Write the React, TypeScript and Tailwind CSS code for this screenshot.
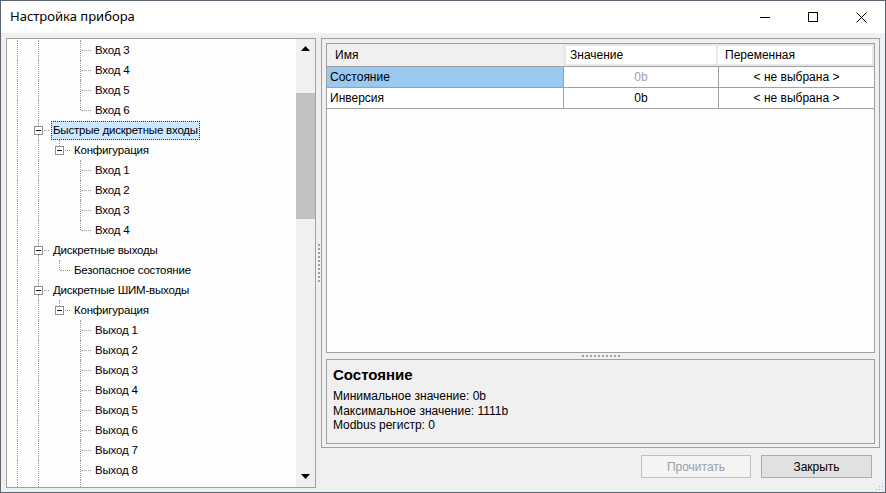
import React from "react";

type Guide = "pipe" | "tee" | "elbow" | "none";

type Node = {
  label: string;
  guides: Guide[];
  box?: boolean;
  selected?: boolean;
};

const P: Guide = "pipe";
const N: Guide = "none";

const rows: Node[] = [
  { label: "Вход 3", guides: [P, P, N, "tee"] },
  { label: "Вход 4", guides: [P, P, N, "tee"] },
  { label: "Вход 5", guides: [P, P, N, "tee"] },
  { label: "Вход 6", guides: [P, P, N, "elbow"] },
  { label: "Быстрые дискретные входы", guides: [P, "tee"], box: true, selected: true },
  { label: "Конфигурация", guides: [P, P, "elbow"], box: true },
  { label: "Вход 1", guides: [P, P, N, "tee"] },
  { label: "Вход 2", guides: [P, P, N, "tee"] },
  { label: "Вход 3", guides: [P, P, N, "tee"] },
  { label: "Вход 4", guides: [P, P, N, "elbow"] },
  { label: "Дискретные выходы", guides: [P, "tee"], box: true },
  { label: "Безопасное состояние", guides: [P, P, "elbow"] },
  { label: "Дискретные ШИМ-выходы", guides: [P, "tee"], box: true },
  { label: "Конфигурация", guides: [P, P, "elbow"], box: true },
  { label: "Выход 1", guides: [P, P, N, "tee"] },
  { label: "Выход 2", guides: [P, P, N, "tee"] },
  { label: "Выход 3", guides: [P, P, N, "tee"] },
  { label: "Выход 4", guides: [P, P, N, "tee"] },
  { label: "Выход 5", guides: [P, P, N, "tee"] },
  { label: "Выход 6", guides: [P, P, N, "tee"] },
  { label: "Выход 7", guides: [P, P, N, "tee"] },
  { label: "Выход 8", guides: [P, P, N, "tee"] },
];

function GuideCell({ g, last, box }: { g: Guide; last: boolean; box?: boolean }) {
  return (
    <div className="relative w-[21px] h-full shrink-0">
      {(g === "pipe" || g === "tee") && (
        <div className="absolute left-[10px] top-0 bottom-0 border-l border-dotted border-[#a0a0a0]" />
      )}
      {g === "elbow" && (
        <div className="absolute left-[10px] top-0 h-[10px] border-l border-dotted border-[#a0a0a0]" />
      )}
      {last && (g === "tee" || g === "elbow") && (
        <div className="absolute left-[11px] top-[10px] w-[10px] border-t border-dotted border-[#a0a0a0]" />
      )}
      {last && box && (
        <div className="absolute left-[6px] top-[6px] w-[9px] h-[9px] border border-[#8f8f8f] bg-white flex items-center justify-center">
          <div className="w-[5px] h-px bg-[#1a1a1a]" />
        </div>
      )}
    </div>
  );
}

function TreeRow({ node }: { node: Node }) {
  return (
    <div className="flex h-[20px] items-center shrink-0">
      {node.guides.map((g, i) => (
        <GuideCell key={i} g={g} last={i === node.guides.length - 1} box={node.box} />
      ))}
      <span
        className={
          "ml-[2px] px-[1px] h-[19px] leading-[17px] whitespace-nowrap border tracking-[-0.2px] " +
          (node.selected ? "bg-[#cce8ff] border-dotted border-[#333]" : "border-transparent")
        }
      >
        {node.label}
      </span>
    </div>
  );
}

function Tree() {
  return (
    <div className="w-[310px] h-[450px] border border-[#a0a0a0] bg-[#fdfdfd] flex shrink-0">
      <div className="flex-1 overflow-hidden pt-[1px] flex flex-col text-[11.5px] text-black">
        {rows.map((r, i) => (
          <TreeRow key={i} node={r} />
        ))}
        {/* guide lines continuing below the last visible row */}
        <div className="flex flex-1">
          <GuideCell g="pipe" last={false} />
          <GuideCell g="pipe" last={false} />
          <GuideCell g="none" last={false} />
          <GuideCell g="pipe" last={false} />
        </div>
      </div>
      <div className="w-[19px] bg-[#f0f0f0] flex flex-col items-center">
        <div className="h-[19px] w-full flex items-center justify-center">
          <svg width="9" height="5" viewBox="0 0 9 5">
            <path d="M0 5 L4.5 0 L9 5 Z" fill="#000" />
          </svg>
        </div>
        <div className="mt-[35px] w-full h-[126px] bg-[#c1c1c1]" />
        <div className="flex-1" />
        <div className="h-[22px] w-full flex items-center justify-center">
          <svg width="9" height="5" viewBox="0 0 9 5">
            <path d="M0 0 L9 0 L4.5 5 Z" fill="#000" />
          </svg>
        </div>
      </div>
    </div>
  );
}

function Dots({ vertical }: { vertical?: boolean }) {
  const items = Array.from({ length: 10 });
  return (
    <div className={vertical ? "flex flex-col gap-[2px]" : "flex gap-[2px]"}>
      {items.map((_, i) => (
        <div key={i} className="w-[2px] h-[2px] bg-[#a0a0a0]" />
      ))}
    </div>
  );
}

function Grid() {
  return (
    <div className="h-[310px] border border-[#a0a0a0] bg-[#fdfdfd] text-[12px] text-black flex flex-col">
      <div className="flex h-[23px] border-b border-[#a0a0a0] bg-[#f0f0f0]">
        <div className="w-[236px] pl-[8px] flex items-center">Имя</div>
        <div className="w-[155px] border-l-[3px] border-y-[2px] border-r-[2px] border-[#e8e8e8] bg-white pl-[4px] flex items-center">
          Значение
        </div>
        <div className="flex-1 border-y-[2px] border-r-[2px] border-[#e8e8e8] bg-white pl-[7px] flex items-center">
          Переменная
        </div>
      </div>
      <div className="flex h-[21px] border-b border-[#a0a0a0]">
        <div className="w-[236px] pl-[3px] bg-[#99c9ef] flex items-center">Состояние</div>
        <div className="w-[155px] border-l border-[#a0a0a0] bg-white text-[#a0a0a0] flex items-center justify-center">
          0b
        </div>
        <div className="flex-1 border-l border-[#a0a0a0] bg-white flex items-center justify-center">
          &lt; не выбрана &gt;
        </div>
      </div>
      <div className="flex h-[21px] border-b border-[#a0a0a0]">
        <div className="w-[236px] pl-[3px] bg-white flex items-center">Инверсия</div>
        <div className="w-[155px] border-l border-[#a0a0a0] bg-white flex items-center justify-center">0b</div>
        <div className="flex-1 border-l border-[#a0a0a0] bg-white flex items-center justify-center">
          &lt; не выбрана &gt;
        </div>
      </div>
    </div>
  );
}

export default function App() {
  return (
    <div
      className="w-[886px] h-[493px] border border-[#5c6670] bg-[#f0f0f0] flex flex-col overflow-hidden"
      style={{ fontFamily: '"Liberation Sans", Arial, sans-serif' }}
    >
      {/* title bar */}
      <div className="h-[32px] bg-white flex items-center shrink-0">
        <div className="pl-[9px] flex-1 text-[13px] text-black" style={{ fontFamily: '"Noto Sans", sans-serif' }}>
          Настройка прибора
        </div>
        <div className="w-[48px] h-[32px] flex items-center justify-center">
          <svg width="10" height="10" viewBox="0 0 10 10">
            <path d="M0 5.5 H10" stroke="#000" strokeWidth="1" />
          </svg>
        </div>
        <div className="w-[48px] h-[32px] flex items-center justify-center">
          <svg width="10" height="10" viewBox="0 0 10 10">
            <rect x="0.5" y="0.5" width="9" height="9" fill="none" stroke="#000" strokeWidth="1" />
          </svg>
        </div>
        <div className="w-[48px] h-[32px] flex items-center justify-center">
          <svg width="11" height="11" viewBox="0 0 11 11">
            <path d="M0.5 0.5 L10.5 10.5 M10.5 0.5 L0.5 10.5" stroke="#000" strokeWidth="1" />
          </svg>
        </div>
      </div>

      {/* body */}
      <div className="flex-1 flex pt-[5px] pl-[5px] pr-[5px] pb-[4px] text-[12px]">
        <Tree />
        <div className="w-[5px] flex items-center justify-center">
          <Dots vertical />
        </div>
        <div className="flex-1 flex flex-col relative">
          <div className="h-[410px] border border-[#a0a0a0] px-[4px] pt-[4px] pb-[3px] flex flex-col">
            <Grid />
            <div className="h-[6px] flex items-center justify-center">
              <Dots />
            </div>
            <div className="flex-1 border border-[#a0a0a0] bg-[#f0f0f0] px-[6px] pt-[6px] text-black">
              <div className="text-[15px] font-bold leading-[17px]">Состояние</div>
              <div className="mt-[6px] leading-[14.5px]">
                <div>Минимальное значение: 0b</div>
                <div>Максимальное значение: 1111b</div>
                <div>Modbus регистр: 0</div>
              </div>
            </div>
          </div>
          <div className="mt-[7px] flex justify-end gap-[10px] pr-[8px]">
            <button className="w-[110px] h-[23px] border border-[#bfbfbf] bg-[#f4f4f4] text-[#a0a0a0] text-[12px]">
              Прочитать
            </button>
            <button className="w-[111px] h-[23px] border border-[#adadad] bg-[#e1e1e1] text-black text-[12px]">
              Закрыть
            </button>
          </div>
          <div className="absolute right-[-4px] bottom-[-3px]">
            <svg width="8" height="8" viewBox="0 0 8 8">
              <rect x="6" y="0" width="1" height="1" fill="#b0b0b0" />
              <rect x="6" y="3" width="1" height="1" fill="#b0b0b0" />
              <rect x="3" y="3" width="1" height="1" fill="#b0b0b0" />
              <rect x="6" y="6" width="1" height="1" fill="#b0b0b0" />
              <rect x="3" y="6" width="1" height="1" fill="#b0b0b0" />
              <rect x="0" y="6" width="1" height="1" fill="#b0b0b0" />
            </svg>
          </div>
        </div>
      </div>
    </div>
  );
}
